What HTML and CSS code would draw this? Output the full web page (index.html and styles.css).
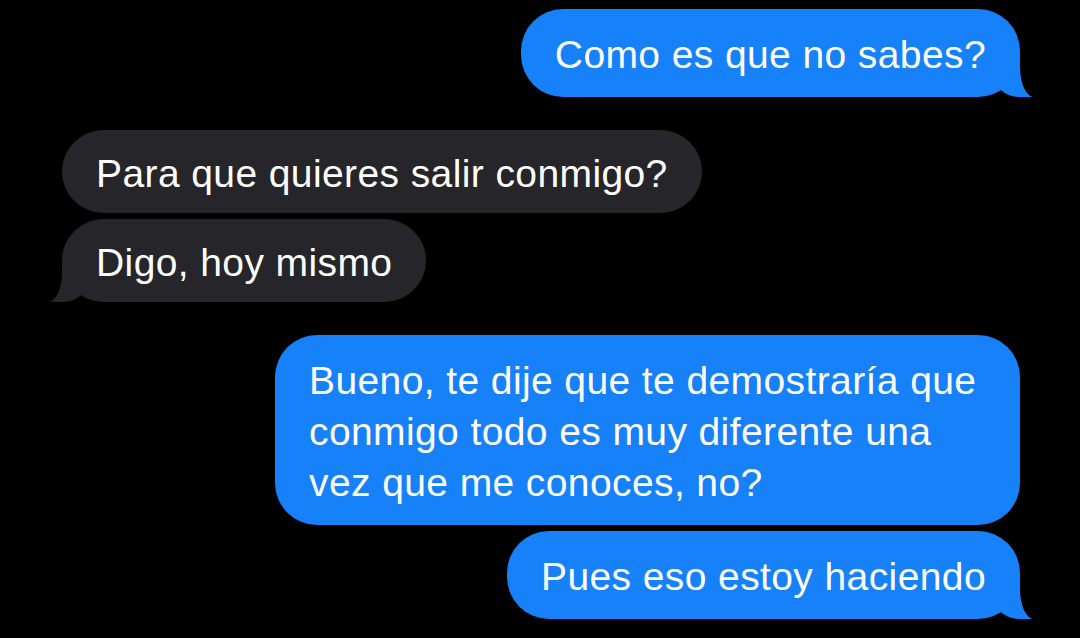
FILE: index.html
```html
<!DOCTYPE html>
<html lang="es">
<head>
  <meta charset="UTF-8">
  <meta name="viewport" content="width=device-width, initial-scale=1">
  <title>Mensajes</title>
  <link rel="stylesheet" href="styles.css">
</head>
<body>
  <div class="chat">
    <div class="row sent">
      <div class="bubble tail">Como es que no sabes?</div>
    </div>

    <div class="row received new-group">
      <div class="bubble">Para que quieres salir conmigo?</div>
    </div>
    <div class="row received">
      <div class="bubble tail">Digo, hoy mismo</div>
    </div>

    <div class="row sent new-group">
      <div class="bubble long">Bueno, te dije que te demostraría que conmigo todo es muy diferente una vez que me conoces, no?</div>
    </div>
    <div class="row sent">
      <div class="bubble tail">Pues eso estoy haciendo</div>
    </div>
  </div>
</body>
</html>
```

FILE: styles.css
```css
body {
  margin: 0;
  background-color: #000;
  color: #fff;
  font-family: 'Liberation Sans', Arial, sans-serif;
  height: 638px;
  overflow: hidden;
}
.chat {
  display: flex;
  flex-direction: column;
  gap: 6px;
  padding: 9px 60px 0 62px;
}
.row {
  display: flex;
}
.row.new-group {
  margin-top: 27px;
}
.row.sent {
  justify-content: flex-end;
}
.row.received {
  justify-content: flex-start;
}
.bubble {
  position: relative;
  padding: 20px 34px 17px;
  border-radius: 42px;
  font-size: 39px;
  letter-spacing: 0.4px;
  line-height: 51px;
}
.sent .bubble {
  background-color: #1681f8;
}
.received .bubble {
  background-color: #262529;
  padding: 18px 34px 14px;
}
.bubble.long {
  max-width: 745px;
  box-sizing: border-box;
}

/* colita de la burbuja */
.bubble.tail::before,
.bubble.tail::after {
  content: "";
  position: absolute;
  bottom: 0;
  height: 40px;
}
.sent .bubble.tail::before {
  right: -12px;
  width: 36px;
  background-color: #1681f8;
  border-bottom-left-radius: 24px 18px;
}
.sent .bubble.tail::after {
  right: -40px;
  width: 40px;
  background-color: #000;
  border-bottom-left-radius: 14px 30px;
}
.received .bubble.tail::before {
  left: -12px;
  width: 36px;
  background-color: #262529;
  border-bottom-right-radius: 24px 18px;
}
.received .bubble.tail::after {
  left: -40px;
  width: 40px;
  background-color: #000;
  border-bottom-right-radius: 14px 30px;
}
```
